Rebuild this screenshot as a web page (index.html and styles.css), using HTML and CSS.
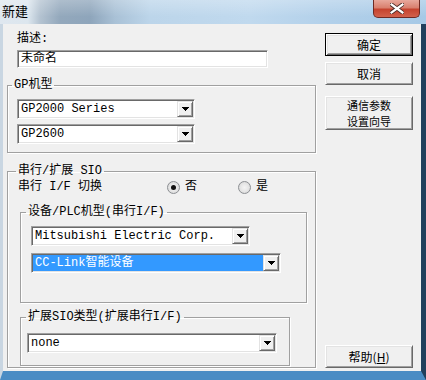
FILE: index.html
```html
<!DOCTYPE html>
<html>
<head>
<meta charset="utf-8">
<link rel="stylesheet" href="styles.css">
</head>
<body>
<div class="window">
  <div class="titlebar">
    <span class="title">新建</span>
    <div class="close">
      <svg width="14" height="11" viewBox="0 0 14 11"><path d="M1.5 1.5L12.5 9.5M12.5 1.5L1.5 9.5" stroke="#4a2a25" stroke-width="4" stroke-linecap="square"/><path d="M1.5 1.5L12.5 9.5M12.5 1.5L1.5 9.5" stroke="#fff" stroke-width="2.2" stroke-linecap="square"/></svg>
    </div>
  </div>
  <div class="frame">
    <div class="client">
      <div class="left-col">
        <div class="label">描述:</div>
        <div class="textbox">未命名</div>
        <fieldset class="group gp">
          <legend>GP机型</legend>
          <div class="combo w178"><span class="value">GP2000 Series</span><span class="drop"><svg width="7" height="4" viewBox="0 0 7 4" shape-rendering="crispEdges"><path d="M0 0h7v1h-1v1h-1v1h-1v1h-1v-1h-1v-1h-1v-1h-1z"/></svg></span></div>
          <div class="combo w178 gap5"><span class="value">GP2600</span><span class="drop"><svg width="7" height="4" viewBox="0 0 7 4" shape-rendering="crispEdges"><path d="M0 0h7v1h-1v1h-1v1h-1v1h-1v-1h-1v-1h-1v-1h-1z"/></svg></span></div>
        </fieldset>
        <fieldset class="group sio">
          <legend>串行/扩展 SIO</legend>
          <div class="switch-row">
            <span class="switch-label">串行 I/F 切换</span>
            <span class="radio checked"><span class="circle"></span>否</span>
            <span class="radio second"><span class="circle"></span>是</span>
          </div>
          <fieldset class="group plc">
            <legend>设备/PLC机型(串行I/F)</legend>
            <div class="combo w219"><span class="value">Mitsubishi Electric Corp.</span><span class="drop"><svg width="7" height="4" viewBox="0 0 7 4" shape-rendering="crispEdges"><path d="M0 0h7v1h-1v1h-1v1h-1v1h-1v-1h-1v-1h-1v-1h-1z"/></svg></span></div>
            <div class="combo w250 gap7 selected"><span class="value">CC-Link智能设备</span><span class="drop"><svg width="7" height="4" viewBox="0 0 7 4" shape-rendering="crispEdges"><path d="M0 0h7v1h-1v1h-1v1h-1v1h-1v-1h-1v-1h-1v-1h-1z"/></svg></span></div>
          </fieldset>
          <fieldset class="group ext">
            <legend>扩展SIO类型(扩展串行I/F)</legend>
            <div class="combo w250"><span class="value">none</span><span class="drop"><svg width="7" height="4" viewBox="0 0 7 4" shape-rendering="crispEdges"><path d="M0 0h7v1h-1v1h-1v1h-1v1h-1v-1h-1v-1h-1v-1h-1z"/></svg></span></div>
          </fieldset>
        </fieldset>
      </div>
      <div class="right-col">
        <div class="btn default">确定</div>
        <div class="btn b-cancel">取消</div>
        <div class="btn b-wizard">通信参数<br>设置向导</div>
        <div class="btn b-help">帮助(<u>H</u>)</div>
      </div>
    </div>
  </div>
</div>
</body>
</html>
```

FILE: styles.css
```css
html, body {
  margin: 0;
  padding: 0;
  background: #fff;
}

.window {
  width: 426px;
  height: 380px;
  display: flex;
  flex-direction: column;
  overflow: hidden;
  font-family: "Liberation Mono", "Noto Sans CJK SC", monospace;
  font-size: 12px;
  color: #000;
  background: #9fc3e2;
}

/* ---------- title bar ---------- */
.titlebar {
  height: 24px;
  flex: none;
  display: flex;
  align-items: flex-start;
  background:
    linear-gradient(to bottom, rgba(255,255,255,0.25), rgba(255,255,255,0) 70%),
    linear-gradient(to right, #dfe7ef 0, #dce6ee 28px, #b4c3d1 40px, #93a8bc 60px, #8ea5bb 90px, #a9c1d6 115px, #bcd5ea 150px, #c0d9ee 250px, #b2d0ea 330px, #a6c9e6 426px);
}

.title {
  font-family: "Noto Sans CJK SC", sans-serif;
  font-size: 13px;
  line-height: 16px;
  margin: 3px 0 0 2px;
  color: #000;
}

.close {
  margin-left: auto;
  margin-right: 6px;
  width: 47px;
  height: 18px;
  box-sizing: border-box;
  border: 1px solid #6e2a24;
  border-top: none;
  border-radius: 0 0 5px 5px;
  background: linear-gradient(to bottom, #e8a89c 0, #d9806f 45%, #c5432f 55%, #d2614c 100%);
  display: flex;
  align-items: center;
  justify-content: center;
}

/* ---------- frame ---------- */
.frame {
  flex: 1;
  display: flex;
  border-left: 3px solid #c9d6e2;
  border-right: 5px solid #213f5c;
  border-bottom: 9px solid #4a8cc4;
}

.client {
  flex: 1;
  display: flex;
  background: #f0f0f0;
}

/* ---------- left column ---------- */
.left-col {
  width: 309px;
  margin-left: 4px;
  padding-top: 8px;
  display: flex;
  flex-direction: column;
  align-items: flex-start;
}

.label {
  margin-left: 10px;
  height: 14px;
  line-height: 14px;
}

.textbox {
  margin: 4px 0 0 10px;
  width: 251px;
  height: 18px;
  box-sizing: border-box;
  padding-left: 3px;
  line-height: 16px;
  background: #fff;
  border: 1px solid;
  border-color: #a0a0a0 #fff #fff #a0a0a0;
  box-shadow: inset 1px 1px 0 #696969, inset -1px -1px 0 #e3e3e3;
}

/* group boxes */
.group {
  margin: 0;
  min-width: 0;
  box-sizing: border-box;
  border: 1px solid #a0a0a0;
  box-shadow: inset 1px 1px 0 #fff, 1px 1px 0 #fff;
  display: flex;
  flex-direction: column;
  align-items: flex-start;
}

.group legend {
  padding: 0 2px;
  line-height: 14px;
  height: 14px;
}

.gp {
  margin-top: 10px;
  width: 309px;
  padding: 7px 0 8px 9px;
}
.gp legend { margin-left: -5px; }

.sio {
  margin-top: 11px;
  width: 309px;
  padding: 2px 0 1px 10px;
}
.sio legend { margin-left: -2px; }

.plc {
  margin: 11px 0 0 2px;
  width: 287px;
  padding: 7px 0 29px 10px;
}
.plc legend { margin-left: -5px; }

.ext {
  margin: 7px 0 0 2px;
  width: 270px;
  padding: 9px 0 12px 6px;
}
.ext legend { margin-left: -1px; }

/* switch row */
.switch-row {
  display: flex;
  align-items: center;
  height: 14px;
  line-height: 14px;
}

.switch-label {
  width: 149px;
}

.radio {
  display: flex;
  align-items: center;
  gap: 5px;
}

.radio.second {
  margin-left: 41px;
}

.circle {
  width: 13px;
  height: 13px;
  box-sizing: border-box;
  border-radius: 50%;
  border: 1px solid #8c8f93;
  background: radial-gradient(circle at 50% 50%, #f4f4f4 0, #e6e6e6 50%, #d0d0d0 100%);
  display: flex;
  align-items: center;
  justify-content: center;
}

.checked .circle::after {
  content: "";
  width: 5px;
  height: 5px;
  border-radius: 50%;
  background: #111;
}

/* combo boxes */
.combo {
  display: flex;
  height: 20px;
  box-sizing: border-box;
  background: #fff;
  border: 1px solid;
  border-color: #a0a0a0 #fff #fff #a0a0a0;
  box-shadow: inset 1px 1px 0 #696969, inset -1px -1px 0 #e3e3e3;
  padding: 1px 1px 1px 1px;
}

.combo .value {
  flex: 1;
  padding-left: 2px;
  line-height: 16px;
  white-space: nowrap;
  overflow: hidden;
}

.combo .drop {
  width: 16px;
  box-sizing: border-box;
  background: #f0f0f0;
  border: 1px solid;
  border-color: #e3e3e3 #696969 #696969 #e3e3e3;
  box-shadow: inset 1px 1px 0 #fff, inset -1px -1px 0 #a0a0a0;
  display: flex;
  align-items: center;
  justify-content: center;
}

.combo.selected .value {
  background: #3399ff;
  color: #fff;
}

.w178 { width: 178px; }
.w219 { width: 219px; }
.w250 { width: 250px; }
.gap5 { margin-top: 5px; }
.gap7 { margin-top: 7px; }

/* ---------- right column ---------- */
.right-col {
  width: 88px;
  margin-left: 9px;
  padding-top: 9px;
  padding-bottom: 3px;
  display: flex;
  flex-direction: column;
}

.btn {
  height: 23px;
  box-sizing: border-box;
  background: #f0f0f0;
  border: 1px solid;
  border-color: #fff #696969 #696969 #fff;
  box-shadow: inset 1px 1px 0 #e3e3e3, inset -1px -1px 0 #a0a0a0;
  display: flex;
  align-items: center;
  justify-content: center;
  text-align: center;
  font-family: "Noto Sans CJK SC", sans-serif;
  font-size: 12px;
  line-height: 14px;
}

.btn.default {
  border: 1px solid #000;
  box-shadow: inset 1px 1px 0 #fff, inset -1px -1px 0 #696969, inset 2px 2px 0 #e3e3e3, inset -2px -2px 0 #a0a0a0;
}

.b-cancel { margin-top: 6px; }
.b-wizard {
  margin-top: 11px;
  height: 34px;
  font-size: 11px;
  line-height: 16px;
}
.b-help { margin-top: auto; }
```
